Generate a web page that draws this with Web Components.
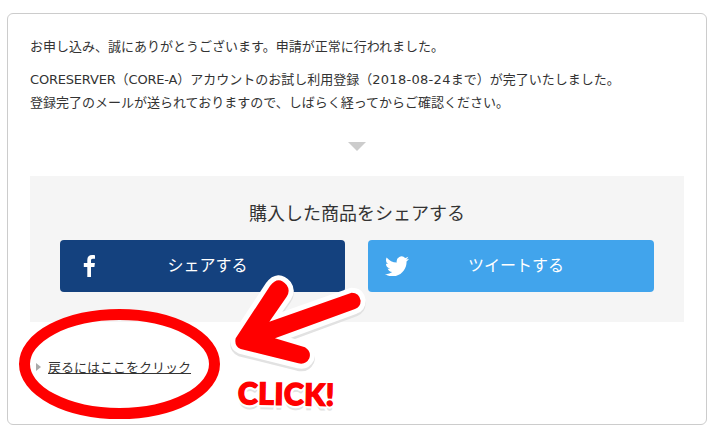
<!DOCTYPE html>
<html lang="ja">
<head>
<meta charset="utf-8">
<title>購入完了</title>
<style>
  html, body { margin: 0; background: #fff; }
  body {
    position: relative;
    width: 723px;
    height: 442px;
    overflow: hidden;
    font-family: "Noto Sans CJK JP", "Liberation Sans", sans-serif;
    color: #333;
  }
  .lat { font-family: "DejaVu Sans", "Noto Sans CJK JP", sans-serif; letter-spacing: -.2px; line-height: 1; }
  .num { font-family: "DejaVu Sans", "Noto Sans CJK JP", sans-serif; letter-spacing: .3px; line-height: 1; }
</style>
</head>
<body>
<template id="order-card-tpl">
  <style>
    :host {
      display: block;
      box-sizing: border-box;
      width: 700px;
      height: 412px;
      margin: 13px 0 0 7px;
      padding: 20px 22px 0;
      border: 1px solid #ccc;
      border-radius: 6px;
      background: #fff;
      font-size: 13px;
      line-height: 23px;
    }
    .marker {
      width: 0;
      height: 0;
      margin: 29px auto 25px;
      border-style: solid;
      border-width: 9px 9px 0;
      border-color: #ccc transparent transparent;
    }
  </style>
  <slot name="message"></slot>
  <div class="marker"></div>
  <slot></slot>
</template>

<template id="share-panel-tpl">
  <style>
    :host {
      display: block;
      box-sizing: border-box;
      height: 146px;
      padding: 23px 30px 0;
      background: #f5f5f5;
    }
    h2 {
      margin: 0 0 14px;
      font-size: 18px;
      font-weight: 400;
      line-height: 27px;
      text-align: center;
    }
    .buttons { display: flex; gap: 23px; }
  </style>
  <h2><slot name="title"></slot></h2>
  <div class="buttons"><slot></slot></div>
</template>

<template id="share-button-tpl">
  <style>
    :host {
      flex: 0 0 var(--w);
      display: grid;
      grid-template-columns: 1fr auto 1fr;
      align-items: center;
      box-sizing: border-box;
      height: 52px;
      padding-left: 10px;
      border-radius: 4px;
      background: var(--bg);
      color: #fff;
      font-size: 16px;
    }
    .icon { display: flex; margin-left: var(--icon-gap); }
    .label { margin-top: -4px; }
  </style>
  <span class="icon"><slot name="icon"></slot></span>
  <span class="label"><slot></slot></span>
  <span></span>
</template>

<template id="back-link-tpl">
  <style>
    :host {
      display: flex;
      align-items: center;
      margin-top: 33px;
      margin-left: 6px;
      font-size: 13px;
      line-height: 23px;
    }
    i {
      width: 0;
      height: 0;
      margin-right: 7px;
      border-style: solid;
      border-width: 4px 0 4px 5px;
      border-color: transparent transparent transparent #aaa;
    }
    a { color: #333; text-decoration: underline; }
  </style>
  <i></i><a href="#"><slot></slot></a>
</template>

<template id="click-note-tpl">
  <style>
    :host {
      position: absolute;
      inset: 0;
      display: block;
      pointer-events: none;
    }
    svg { position: absolute; left: 0; top: 0; }
    .word {
      position: absolute;
      left: 238px;
      top: 374px;
      color: #f00;
      font-family: "Lato", "Liberation Sans", sans-serif;
      font-size: 30px;
      font-weight: 900;
      line-height: 36px;
      letter-spacing: .5px;
      -webkit-text-stroke: 1.5px #f00;
      transform: rotate(1deg);
      transform-origin: left center;
      text-shadow: 3px 0 0 #fff, -3px 0 0 #fff, 0 3px 0 #fff, 0 -3px 0 #fff, 2px 2px 0 #fff, -2px 2px 0 #fff, 2px -2px 0 #fff, -2px -2px 0 #fff, 0 5px 0 #e2e2e2;
    }
  </style>
  <svg width="723" height="442" viewBox="0 0 723 442" fill="none">
    <ellipse cx="119.5" cy="364" rx="95" ry="49.5" stroke="#f00" stroke-width="11"/>
    <g transform="translate(220 270) scale(.3333)" stroke-linejoin="round">
      <path d="M150 48 Q175 15 200 45 Q212 62 200 80 L148 155 L395 68 Q418 68 422 92 Q422 110 405 117 L165 205 L255 232 Q275 245 268 265 Q258 285 235 280 L62 237 Q42 228 47 205 Z" fill="#e2e2e2" stroke="#e2e2e2" stroke-width="30" transform="translate(0 8)"/>
      <path d="M150 48 Q175 15 200 45 Q212 62 200 80 L148 155 L395 68 Q418 68 422 92 Q422 110 405 117 L165 205 L255 232 Q275 245 268 265 Q258 285 235 280 L62 237 Q42 228 47 205 Z" fill="#fff" stroke="#fff" stroke-width="30"/>
      <path d="M150 48 Q175 15 200 45 Q212 62 200 80 L148 155 L395 68 Q418 68 422 92 Q422 110 405 117 L165 205 L255 232 Q275 245 268 265 Q258 285 235 280 L62 237 Q42 228 47 205 Z" fill="#f00"/>
    </g>
  </svg>
  <span class="word"><slot></slot></span>
</template>

<order-card>
  <message-text slot="message">
    <p>お申し込み、誠にありがとうございます。申請が正常に行われました。</p>
    <p><span class="lat">CORESERVER</span>（<span class="lat">CORE-A</span>）アカウントのお試し利用登録（<span class="num">2018-08-24</span>まで）が完了いたしました。<br>登録完了のメールが送られておりますので、しばらく経ってからご確認ください。</p>
  </message-text>
  <share-panel>
    <span slot="title">購入した商品をシェアする</span>
    <share-button style="--bg:#14417e;--icon-gap:13px;--w:285px">
      <svg slot="icon" width="12" height="22" viewBox="0 0 12 22" fill="#fff"><path d="M8 22V12h3.4l.5-4H8V5.6c0-1.1.3-1.9 1.9-1.9H12V.2C11.6.1 10.4 0 9.1 0 6.2 0 4.3 1.8 4.3 5v3H.8v4h3.5v10z"/></svg>
      シェアする
    </share-button>
    <share-button style="--bg:#41a4ec;--icon-gap:7px;--w:286px">
      <svg slot="icon" width="24" height="20" viewBox="0 1.8 24 19.6" preserveAspectRatio="none" fill="#fff"><path d="M23.953 4.57a10 10 0 01-2.825.775 4.958 4.958 0 002.163-2.723c-.951.555-2.005.959-3.127 1.184a4.92 4.92 0 00-8.384 4.482C7.69 8.095 4.067 6.13 1.64 3.162a4.822 4.822 0 00-.666 2.475c0 1.71.87 3.213 2.188 4.096a4.904 4.904 0 01-2.228-.616v.06a4.923 4.923 0 003.946 4.827 4.996 4.996 0 01-2.212.085 4.936 4.936 0 004.604 3.417 9.867 9.867 0 01-6.102 2.105c-.39 0-.779-.023-1.17-.067a13.995 13.995 0 007.557 2.209c9.053 0 13.998-7.496 13.998-13.985 0-.21 0-.42-.015-.63A9.935 9.935 0 0024 4.59z"/></svg>
      ツイートする
    </share-button>
  </share-panel>
  <back-link>戻るにはここをクリック</back-link>
</order-card>
<click-note>CLICK!</click-note>

<script>
  // plain template-backed elements
  function templated(tag, tplId) {
    customElements.define(tag, class extends HTMLElement {
      constructor() {
        super();
        this.attachShadow({ mode: 'open' });
        this.shadowRoot.appendChild(document.getElementById(tplId).content.cloneNode(true));
      }
    });
  }

  class MessageText extends HTMLElement {
    constructor() {
      super();
      this.attachShadow({ mode: 'open' });
      this.shadowRoot.innerHTML = `
        <style>
          :host { display: block; }
          ::slotted(p) { margin: 0 0 10px; }
          ::slotted(p:last-child) { margin-bottom: 0; }
        </style>
        <slot></slot>
      `;
    }
  }
  customElements.define('message-text', MessageText);

  templated('order-card', 'order-card-tpl');
  templated('share-panel', 'share-panel-tpl');
  templated('share-button', 'share-button-tpl');
  templated('back-link', 'back-link-tpl');
  templated('click-note', 'click-note-tpl');
</script>
</body>
</html>
